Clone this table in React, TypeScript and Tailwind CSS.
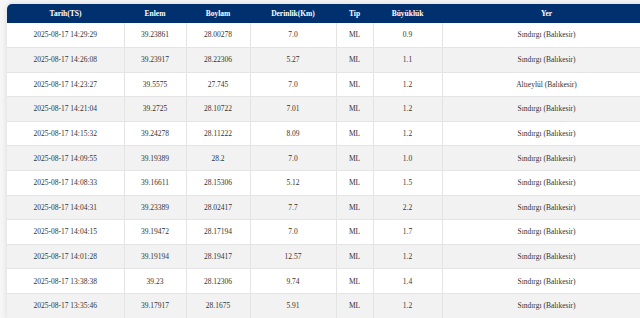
import React from 'react';

interface Quake {
  time: string;
  lat: string;
  lng: string;
  depth: string;
  type: string;
  mag: string;
  place: string;
}

const rows: Quake[] = [
  { time: '2025-08-17 14:29:29', lat: '39.23861', lng: '28.00278', depth: '7.0', type: 'ML', mag: '0.9', place: 'Sındırgı (Balıkesir)' },
  { time: '2025-08-17 14:26:08', lat: '39.23917', lng: '28.22306', depth: '5.27', type: 'ML', mag: '1.1', place: 'Sındırgı (Balıkesir)' },
  { time: '2025-08-17 14:23:27', lat: '39.5575', lng: '27.745', depth: '7.0', type: 'ML', mag: '1.2', place: 'Altıeylül (Balıkesir)' },
  { time: '2025-08-17 14:21:04', lat: '39.2725', lng: '28.10722', depth: '7.01', type: 'ML', mag: '1.2', place: 'Sındırgı (Balıkesir)' },
  { time: '2025-08-17 14:15:32', lat: '39.24278', lng: '28.11222', depth: '8.09', type: 'ML', mag: '1.2', place: 'Sındırgı (Balıkesir)' },
  { time: '2025-08-17 14:09:55', lat: '39.19389', lng: '28.2', depth: '7.0', type: 'ML', mag: '1.0', place: 'Sındırgı (Balıkesir)' },
  { time: '2025-08-17 14:08:33', lat: '39.16611', lng: '28.15306', depth: '5.12', type: 'ML', mag: '1.5', place: 'Sındırgı (Balıkesir)' },
  { time: '2025-08-17 14:04:31', lat: '39.23389', lng: '28.02417', depth: '7.7', type: 'ML', mag: '2.2', place: 'Sındırgı (Balıkesir)' },
  { time: '2025-08-17 14:04:15', lat: '39.19472', lng: '28.17194', depth: '7.0', type: 'ML', mag: '1.7', place: 'Sındırgı (Balıkesir)' },
  { time: '2025-08-17 14:01:28', lat: '39.19194', lng: '28.19417', depth: '12.57', type: 'ML', mag: '1.2', place: 'Sındırgı (Balıkesir)' },
  { time: '2025-08-17 13:38:38', lat: '39.23', lng: '28.12306', depth: '9.74', type: 'ML', mag: '1.4', place: 'Sındırgı (Balıkesir)' },
  { time: '2025-08-17 13:35:46', lat: '39.17917', lng: '28.1675', depth: '5.91', type: 'ML', mag: '1.2', place: 'Sındırgı (Balıkesir)' },
];

const headers = ['Tarih(TS)', 'Enlem', 'Boylam', 'Derinlik(Km)', 'Tip', 'Büyüklük', 'Yer'];
const widths = ['w-[117px]', 'w-[62px]', 'w-[64px]', 'w-[86px]', 'w-[37px]', 'w-[69px]', 'w-[209px]'];

export default function App() {
  return (
    <div className="h-[318px] w-[640px] overflow-hidden bg-[#f6f6f6] pl-[7px] pt-[4px] font-['Liberation_Serif',serif]">
      <div className="w-[644px] overflow-hidden rounded-t-[5px] bg-white shadow-[0_0_6px_rgba(0,0,0,0.12)]">
        <table className="w-[644px] table-fixed border-collapse text-[7.5px] text-[#333]">
          <thead>
            <tr className="h-[19px] bg-[#01306f] text-white">
              {headers.map((h, i) => (
                <th key={h} className={`${widths[i]} text-center font-bold`}>
                  {h}
                </th>
              ))}
            </tr>
          </thead>
          <tbody>
            {rows.map((r, i) => (
              <tr
                key={r.time}
                className={`h-[24.6px] border-b border-[#e4e4e4] ${i % 2 === 1 ? 'bg-[#f2f2f2]' : 'bg-white'}`}
              >
                {[r.time, r.lat, r.lng, r.depth, r.type, r.mag, r.place].map((v, j) => (
                  <td key={j} className="border-r border-[#e4e4e4] text-center">
                    {v}
                  </td>
                ))}
              </tr>
            ))}
          </tbody>
        </table>
      </div>
    </div>
  );
}
